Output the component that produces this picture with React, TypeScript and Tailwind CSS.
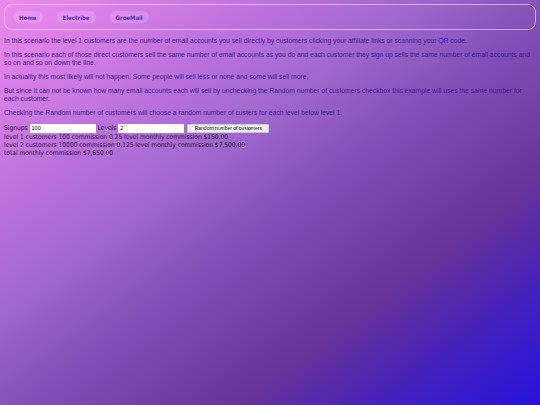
import React from "react";

export default function App() {
  return (
    <div
      className="w-[540px] h-[405px] overflow-hidden bg-[linear-gradient(to_bottom_right,#ee8af0_0%,#b870dc_27%,#a268d0_38%,#8250b8_52%,#663399_72%,#4020c0_87%,#2812dc_100%)]"
    >
      <div className="p-[4px]">
        <nav className="h-[26px] rounded-[8px] border border-[rgba(255,220,255,0.6)] flex items-center px-[8px] gap-[14px]">
          {["Home", "Electribe", "GroeMail"].map((l) => (
            <span
              key={l}
              className="px-[6px] h-[12px] flex items-center rounded-full bg-[rgba(255,255,255,0.14)] text-[6px] font-bold text-[#5a2ac0] [font-family:'DejaVu_Sans_Condensed','DejaVu_Sans',sans-serif]"
            >
              {l}
            </span>
          ))}
        </nav>
      </div>
      <div className="px-[4px] pt-[3px] text-[6.75px] leading-[8px] text-[#3c1c90] [font-family:'Liberation_Sans',Arial,sans-serif] flex flex-col gap-[6px]">
        <p>In this scenario the level 1 customers are the number of email accounts you sell directly by customers clicking your affiliate links or scanning your QR code.</p>
        <p>In this scenario each of those direct customers sell the same number of email accounts as you do and each customer they sign up sells the same number of email accounts and so on and so on down the line.</p>
        <p>In actuality this most likely will not happen. Some people will sell less or none and some will sell more.</p>
        <p>But since it can not be known how many email accounts each will sell by unchecking the Random number of customers checkbox this example will uses the same number for each customer.</p>
        <p>Checking the Random number of customers will choose a random number of custers for each level below level 1.</p>
      </div>
      <div className="px-[4px] pt-[6px] text-[6.6px] leading-[8px] text-[#1e1030] [font-family:'DejaVu_Sans_Condensed','DejaVu_Sans',sans-serif]">
        <div className="flex items-center h-[10px]">
          <span>Signups</span>
          <span className="ml-[2px] w-[66px] h-[9px] bg-white text-[5.5px] leading-[9px] pl-[2px] text-black [font-family:'Liberation_Sans',sans-serif]">100</span>
          <span className="ml-[2px]">Levels</span>
          <span className="ml-[2px] w-[66px] h-[9px] bg-white text-[5.5px] leading-[9px] pl-[2px] text-black [font-family:'Liberation_Sans',sans-serif]">2</span>
          <span className="ml-[3px] w-[82px] h-[9px] bg-[#efefef] border border-[#c8c8c8] rounded-[1px] text-[5px] leading-[7px] text-center text-[#222] [font-family:'Liberation_Sans',sans-serif]">Random number of customers</span>
        </div>
        <div>level 1 customers 100 commission 0.25 level monthly commission $150.00</div>
        <div>level 2 customers 10000 commission 0.125 level monthly commission $7,500.00</div>
        <div>total monthly commission $7,650.00</div>
      </div>
    </div>
  );
}
